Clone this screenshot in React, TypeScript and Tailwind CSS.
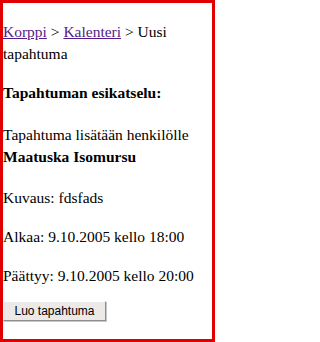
import React from "react";

const App: React.FC = () => {
    return (
        <div className="w-[215px] h-[342px] border-[3px] border-[#e00000] bg-white text-black font-['Liberation_Serif','Times_New_Roman',serif] text-[15.5px] leading-[22px] pt-[18px] overflow-hidden">
            <p>
                <a href="#" className="text-[#551a8b] underline">Korppi</a>
                <span>{" > "}</span>
                <a href="#" className="text-[#551a8b] underline">Kalenteri</a>
                <span>{" > Uusi tapahtuma"}</span>
            </p>

            <p className="mt-[17px] font-bold">Tapahtuman esikatselu:</p>

            <p className="mt-[20px]">
                Tapahtuma lisätään henkilölle
                <br />
                <b>Maatuska Isomursu</b>
            </p>

            <p className="mt-[19px]">Kuvaus: fdsfads</p>

            <p className="mt-[17px]">Alkaa: 9.10.2005 kello 18:00</p>

            <p className="mt-[17px]">Päättyy: 9.10.2005 kello 20:00</p>

            <button className="mt-[14px] w-[103px] h-[20px] bg-[#ece9e6] border border-t-white border-l-white border-r-[#8e8e8e] border-b-[#8e8e8e] shadow-[1px_1px_0_#c8c8c8] font-['Liberation_Sans',Arial,sans-serif] text-[12px] leading-none text-black">
                Luo tapahtuma
            </button>
        </div>
    );
};

export default App;
